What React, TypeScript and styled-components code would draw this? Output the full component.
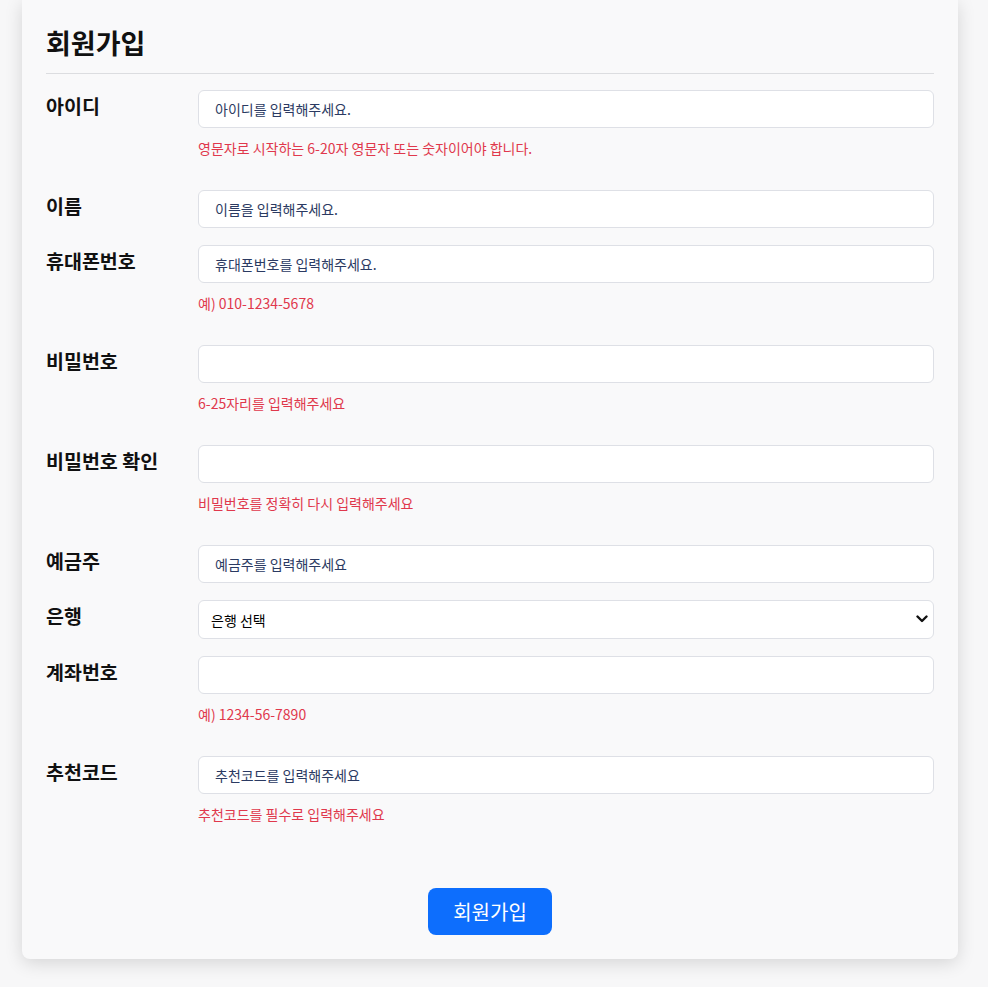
import React from 'react';
import styled, { createGlobalStyle } from 'styled-components';

const GlobalStyle = createGlobalStyle`
    html, body {
        margin: 0;
        padding: 0;
        background: #f7f7f8;
        font-family: "Noto Sans CJK KR", "Noto Sans", sans-serif;
    }
    * {
        box-sizing: border-box;
    }
`

const Page = styled.div`
    padding: 0 30px 27px 22px;
`

const Card = styled.div`
    width: 936px;
    background: #f9f9fa;
    border-radius: 0 0 8px 8px;
    box-shadow: 0 4px 18px rgba(0, 0, 0, 0.14);
    padding: 25px 24px 24px;
`

const Title = styled.h1`
    margin: 0 0 16px;
    font-size: 27px;
    font-weight: 700;
    line-height: 36px;
    color: #111;
    padding-bottom: 12px;
    border-bottom: 1px solid #dcdde0;
`

const Form = styled.div`
    display: flex;
    flex-direction: column;
    gap: 17px;
`

const Field = styled.div`
    display: flex;
    flex-direction: column;
`

const Row = styled.div`
    display: grid;
    grid-template-columns: 152px 1fr;
    align-items: start;
`

const Label = styled.label`
    font-size: 19.5px;
    font-weight: 700;
    line-height: 32px;
    color: #111;
`

const Input = styled.input`
    width: 100%;
    height: 38px;
    border: 1px solid #dee0e6;
    border-radius: 6px;
    background: #fff;
    padding: 0 16px;
    font-family: inherit;
    font-size: 14px;
    color: #2b3a62;
    outline: none;
`

const SelectWrap = styled.div`
    position: relative;
`

const Select = styled.select`
    width: 100%;
    height: 39px;
    border: 1px solid #dee0e6;
    border-radius: 6px;
    background: #fff;
    padding: 0 12px;
    font-family: inherit;
    font-size: 14px;
    color: #000;
    appearance: none;
    outline: none;
`

const Chevron = styled.svg`
    position: absolute;
    right: 6px;
    top: 14px;
    pointer-events: none;
`

const Help = styled.div`
    margin: 10px 0 15px 152px;
    font-size: 14px;
    line-height: 20px;
    color: #e0384c;
`

const Actions = styled.div`
    display: flex;
    justify-content: center;
    margin-top: 49px;
`

const Submit = styled.button`
    background: #0d6efd;
    color: #fff;
    border: none;
    border-radius: 8px;
    font-family: inherit;
    font-size: 20px;
    line-height: 27px;
    padding: 10px 25px;
`

type FieldDef = {
    label: string
    value?: string
    help?: string
    select?: boolean
}

const fields: FieldDef[] = [
    { label: '아이디', value: '아이디를 입력해주세요.', help: '영문자로 시작하는 6-20자 영문자 또는 숫자이어야 합니다.' },
    { label: '이름', value: '이름을 입력해주세요.' },
    { label: '휴대폰번호', value: '휴대폰번호를 입력해주세요.', help: '예) 010-1234-5678' },
    { label: '비밀번호', help: '6-25자리를 입력해주세요' },
    { label: '비밀번호 확인', help: '비밀번호를 정확히 다시 입력해주세요' },
    { label: '예금주', value: '예금주를 입력해주세요' },
    { label: '은행', select: true },
    { label: '계좌번호', help: '예) 1234-56-7890' },
    { label: '추천코드', value: '추천코드를 입력해주세요', help: '추천코드를 필수로 입력해주세요' },
]

const App = () => {
    return (
        <Page>
            <GlobalStyle />
            <Card>
                <Title>회원가입</Title>
                <Form>
                    {fields.map((f) => (
                        <Field key={f.label}>
                            <Row>
                                <Label>{f.label}</Label>
                                {f.select ? (
                                    <SelectWrap>
                                        <Select defaultValue="">
                                            <option value="">은행 선택</option>
                                        </Select>
                                        <Chevron width="12" height="10" viewBox="0 0 12 10">
                                            <path d="M1.5 2.5 L6 7 L10.5 2.5" fill="none" stroke="#111" strokeWidth="2.4" strokeLinecap="round" strokeLinejoin="round" />
                                        </Chevron>
                                    </SelectWrap>
                                ) : (
                                    <Input type="text" defaultValue={f.value ?? ''} />
                                )}
                            </Row>
                            {f.help && <Help>{f.help}</Help>}
                        </Field>
                    ))}
                </Form>
                <Actions>
                    <Submit>회원가입</Submit>
                </Actions>
            </Card>
        </Page>
    )
}

export default App
